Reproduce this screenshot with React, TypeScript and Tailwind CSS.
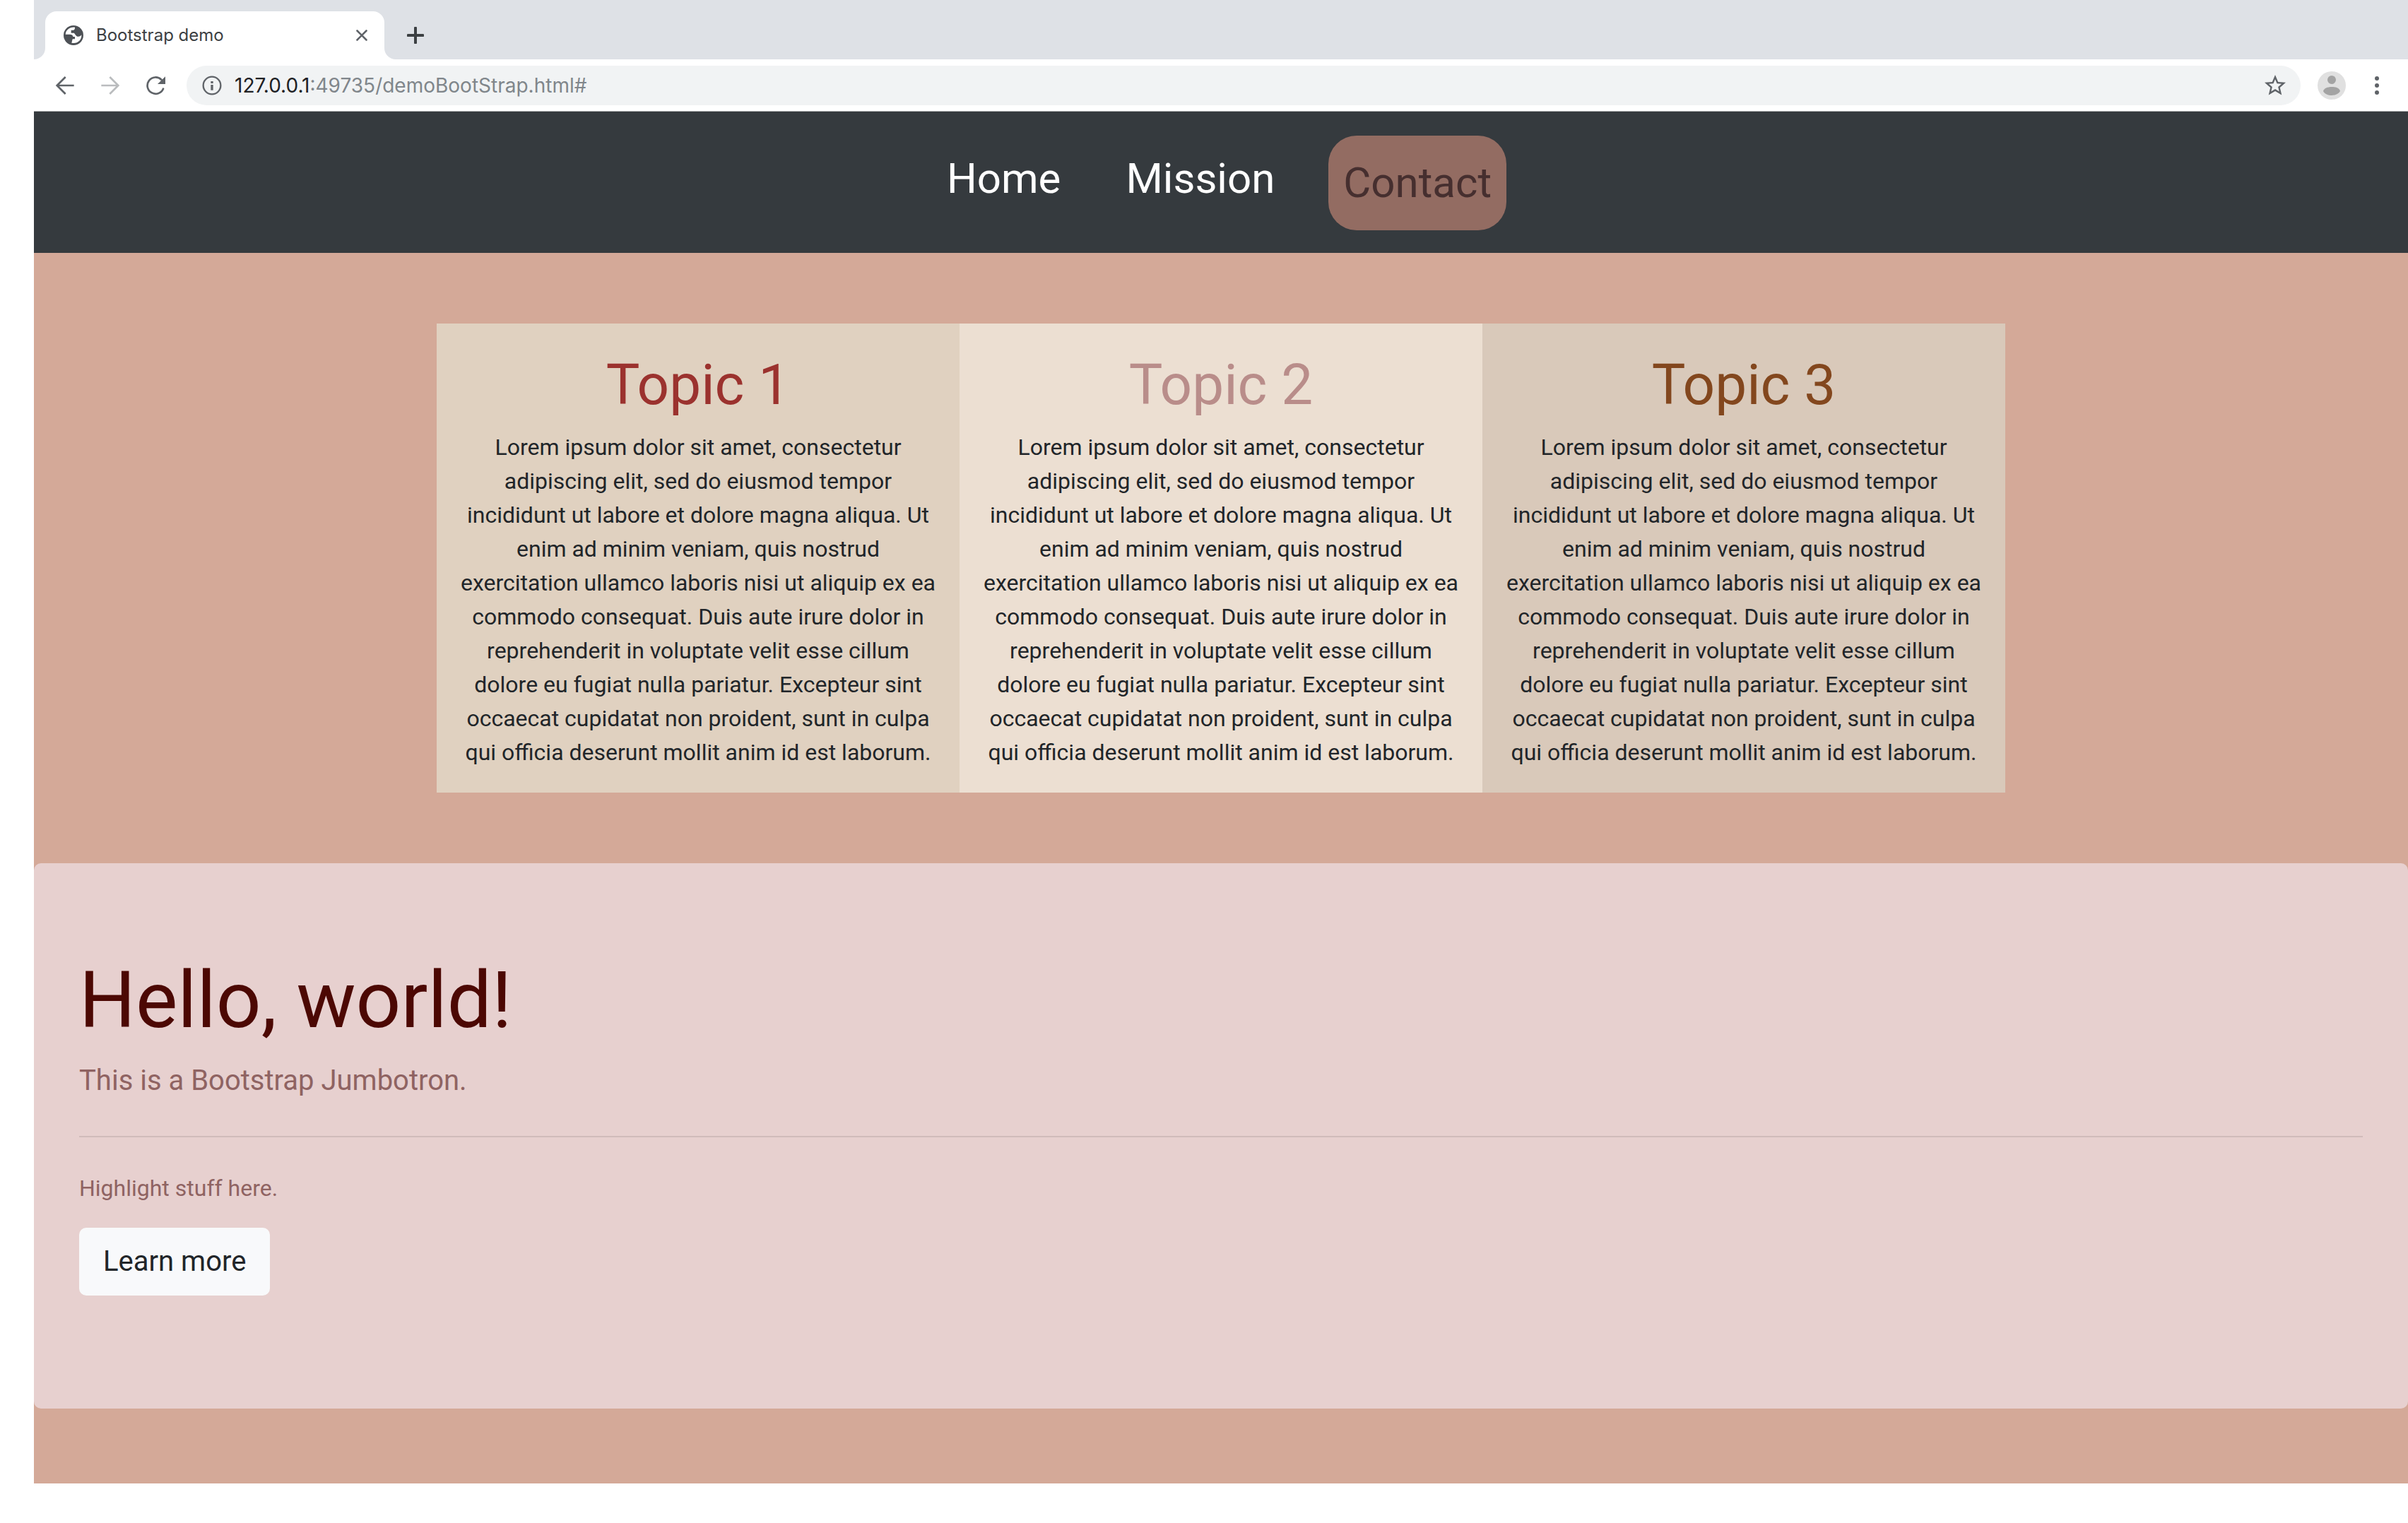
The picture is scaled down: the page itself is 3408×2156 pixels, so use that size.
import { MdStarBorder } from "react-icons/md";

const LOREM =
  "Lorem ipsum dolor sit amet, consectetur adipiscing elit, sed do eiusmod tempor incididunt ut labore et dolore magna aliqua. Ut enim ad minim veniam, quis nostrud exercitation ullamco laboris nisi ut aliquip ex ea commodo consequat. Duis aute irure dolor in reprehenderit in voluptate velit esse cillum dolore eu fugiat nulla pariatur. Excepteur sint occaecat cupidatat non proident, sunt in culpa qui officia deserunt mollit anim id est laborum.";

const topics = [
  { title: "Topic 1", panel: "bg-[#e0d1c0]", heading: "text-[#9b322e]" },
  { title: "Topic 2", panel: "bg-[#ecdfd2]", heading: "text-[#b98d8a]" },
  { title: "Topic 3", panel: "bg-[#d9c9ba]", heading: "text-[#83471e]" },
];

function GlobeIcon() {
  return (
    <svg className="h-7 w-7" viewBox="18 18 84 84" aria-hidden="true">
      <circle cx="60" cy="60" r="42" fill="#4d5156" />
      <path
        d="M66 26C44 24 27 38 26 56H44C54 56 58 60 58 66H66V76H56L52 92C74 98 96 82 94 58C90 66 78 68 72 62C66 56 66 52 62 50H50V38H60C66 36 66 30 66 26Z"
        fill="#fff"
      />
    </svg>
  );
}

function ArrowIcon({ flip = false }: { flip?: boolean }) {
  return (
    <svg className="h-7 w-7" viewBox="-42 -42 84 84" fill="none" stroke="currentColor" strokeWidth="8" aria-hidden="true">
      <path d={flip ? "M-38 0H33M-2 -36L34 0L-2 36" : "M38 0H-33M2 -36L-34 0L2 36"} />
    </svg>
  );
}

function ReloadIcon() {
  return (
    <svg className="h-7 w-7" viewBox="-42 -42 84 84" aria-hidden="true">
      <path
        d="M25 -25A35 35 0 1 0 33 14"
        fill="none"
        stroke="currentColor"
        strokeWidth="8"
        strokeLinecap="round"
      />
      <path d="M42 -38V-6H9Z" fill="currentColor" />
    </svg>
  );
}

function InfoIcon() {
  return (
    <svg className="h-7 w-7 text-[#5f6368]" viewBox="-42 -42 84 84" aria-hidden="true">
      <circle r="37" fill="none" stroke="currentColor" strokeWidth="7" />
      <path d="M-5 -18H5V-9H-5ZM-5 -3H5V20H-5Z" fill="currentColor" />
    </svg>
  );
}

function TabStrip() {
  return (
    <div className="flex h-[84px] items-end bg-[#dee1e6]">
      <svg className="h-4 w-4 shrink-0" viewBox="0 0 16 16" aria-hidden="true">
        <path d="M0 16A16 16 0 0 0 16 0V16Z" fill="#fff" />
      </svg>
      <div className="flex h-[68px] w-[480px] items-center rounded-t-2xl bg-white pr-6 pl-[26px]">
        <GlobeIcon />
        <span className="ml-[18px] flex-1 text-2xl text-[#3c4043]">Bootstrap demo</span>
        <button aria-label="Close tab">
          <svg className="h-4 w-4" viewBox="0 0 16 16" aria-hidden="true">
            <path d="M1.5 1.5l13 13M14.5 1.5l-13 13" stroke="#5f6368" strokeWidth="2.6" strokeLinecap="round" />
          </svg>
        </button>
      </div>
      <svg className="h-4 w-4 shrink-0" viewBox="0 0 16 16" aria-hidden="true">
        <path d="M16 16A16 16 0 0 1 0 0V16Z" fill="#fff" />
      </svg>
      <button aria-label="New tab" className="mb-[22px] ml-4">
        <svg className="h-6 w-6" viewBox="0 0 24 24" aria-hidden="true">
          <path d="M12 1.5v21M1.5 12h21" stroke="#3c4043" strokeWidth="4" strokeLinecap="round" />
        </svg>
      </button>
    </div>
  );
}

function Toolbar() {
  return (
    <div className="flex h-[74px] items-center border-b border-[#b0b1b3] bg-white pr-8 pl-[30px]">
      <div className="flex gap-9 text-[#5f6368]">
        <button aria-label="Back">
          <ArrowIcon />
        </button>
        <button aria-label="Forward" className="text-[#babcbe]">
          <ArrowIcon flip />
        </button>
        <button aria-label="Reload">
          <ReloadIcon />
        </button>
      </div>
      <div className="ml-[30px] flex h-14 flex-1 items-center rounded-full bg-[#f1f3f4] pr-[18px] pl-[22px]">
        <InfoIcon />
        <a href="#" className="ml-[18px] flex-1 text-[28px] text-[#80868b]">
          <span className="text-[#202124]">127.0.0.1</span>:49735/demoBootStrap.html#
        </a>
        <button aria-label="Bookmark this page">
          <MdStarBorder className="h-9 w-9 text-[#5f6368]" />
        </button>
      </div>
      <button aria-label="Profile" className="ml-6">
        <svg className="h-10 w-10" viewBox="0 0 40 40" aria-hidden="true">
          <circle cx="20" cy="20" r="20" fill="#e0e0e0" />
          <circle cx="20" cy="12" r="6" fill="#a3a3a3" />
          <path d="M8 28c1-4 6-6 12-6s11 2 12 6c-2 4-7 6-12 6s-10-2-12-6z" fill="#a3a3a3" />
        </svg>
      </button>
      <button aria-label="Menu" className="ml-8">
        <svg className="h-8 w-6" viewBox="0 0 24 32" aria-hidden="true" fill="#5f6368">
          <circle cx="12" cy="6" r="3" />
          <circle cx="12" cy="16" r="3" />
          <circle cx="12" cy="26" r="3" />
        </svg>
      </button>
    </div>
  );
}

export default function App() {
  return (
    <div className="min-h-screen bg-white pl-12">
      <header className="font-[Inter,sans-serif]">
        <TabStrip />
        <Toolbar />
      </header>
      <div className="bg-[#d4a998] pb-[106px] font-[Roboto,sans-serif] text-[#212529]">
        <nav className="flex h-[200px] items-start justify-center bg-[#353a3e] pt-[34px] pr-1 text-[60px] leading-[90px] text-white">
          <a href="#" className="mt-4 px-5">Home</a>
          <a href="#" className="mt-4 ml-[52px] px-5">Mission</a>
          <a href="#" className="ml-[56px] rounded-[40px] bg-[#936c62] px-[21px] py-[22px] text-[#462f2f]">Contact</a>
        </nav>
        <main>
          <section className="mx-auto mt-[100px] grid max-w-[2220px] grid-cols-3">
            {topics.map((t) => (
              <article key={t.title} className={`px-[30px] pt-[39px] pb-[33px] text-center ${t.panel}`}>
                <h2 className={`text-[80px] leading-[96px] ${t.heading}`}>{t.title}</h2>
                <p className="mt-4 text-[32px] leading-[48px]">{LOREM}</p>
              </article>
            ))}
          </section>
          <section className="mt-[100px] rounded-[10px] bg-[#e7d0cf] px-16 pt-[127px] pb-40 text-[#8f6362]">
            <h1 className="text-[112px] leading-[134px] text-[#4c0803]">Hello, world!</h1>
            <p className="mt-[17px] text-[40px] leading-[60px]">This is a Bootstrap Jumbotron.</p>
            <hr className="my-12 border-t-2 border-[#d0bbba]" />
            <p className="text-[32px] leading-[48px]">Highlight stuff here.</p>
            <a
              href="#"
              role="button"
              className="mt-8 inline-block rounded-[10px] border-2 border-[#f8f9fa] bg-[#f8f9fb] px-8 py-4 align-top text-[40px] leading-[60px] text-[#212529]"
            >
              Learn more
            </a>
          </section>
        </main>
      </div>
    </div>
  );
}
